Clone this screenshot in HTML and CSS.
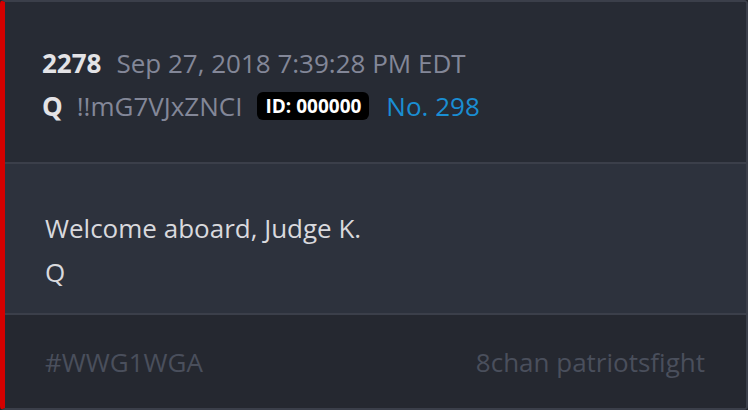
FILE: index.html
```html
<!DOCTYPE html>
<html lang="en">
<head>
    <meta charset="UTF-8">
    <title>Post 2278</title>
    <link rel="stylesheet" href="styles.css">
</head>
<body>
    <div class="post">
        <div class="post-head">
            <div class="head-row">
                <span class="post-num">2278</span>
                <span class="post-date">Sep 27, 2018 7:39:28 PM EDT</span>
            </div>
            <div class="head-row">
                <span class="post-name">Q</span>
                <span class="post-trip">!!mG7VJxZNCI</span>
                <span class="post-id">ID: 000000</span>
                <span class="post-no">No. 298</span>
            </div>
        </div>
        <div class="post-body">
            <p>Welcome aboard, Judge K.</p>
            <p>Q</p>
        </div>
        <div class="post-foot">
            <span>#WWG1WGA</span>
            <span>8chan patriotsfight</span>
        </div>
    </div>
</body>
</html>
```

FILE: styles.css
```css
body {
    margin: 0;
    background-color: #1f2228;
    font-family: "Open Sans", sans-serif;
}
.post {
    width: 748px;
    height: 410px;
    box-sizing: border-box;
    display: flex;
    flex-direction: column;
    border: 2px solid #3b3f4a;
    border-left: 5px solid #d40000;
    border-radius: 4px;
    overflow: hidden;
}
.post-head {
    height: 162px;
    flex-shrink: 0;
    box-sizing: border-box;
    padding: 39px 0 0 37px;
    background-color: #272b34;
    border-bottom: 2px solid #3b3f4a;
}
.head-row {
    display: flex;
    align-items: center;
    height: 43px;
    font-size: 26px;
    color: #838798;
}
.post-num {
    font-weight: bold;
    color: #e3e3e6;
    margin-right: 15px;
}
.post-name {
    font-weight: bold;
    color: #e3e3e6;
    margin-right: 14px;
}
.post-id {
    background-color: #000;
    color: #fff;
    font-weight: bold;
    font-size: 19px;
    line-height: 28px;
    border-radius: 6px;
    padding: 0 8px;
    margin: 0 17px 0 15px;
}
.post-no {
    color: #1a8ed3;
}
.post-body {
    height: 151px;
    flex-shrink: 0;
    box-sizing: border-box;
    padding: 42px 0 0 40px;
    background-color: #2d323d;
    border-bottom: 2px solid #3b3f4a;
    color: #d9d9dd;
    font-size: 26px;
}
.post-body p {
    margin: 0;
    line-height: 44px;
}
.post-foot {
    flex: 1;
    display: flex;
    justify-content: space-between;
    align-items: center;
    padding: 0 41px 0 40px;
    background-color: #252830;
    color: #4a4f5c;
    font-size: 26px;
}
```
